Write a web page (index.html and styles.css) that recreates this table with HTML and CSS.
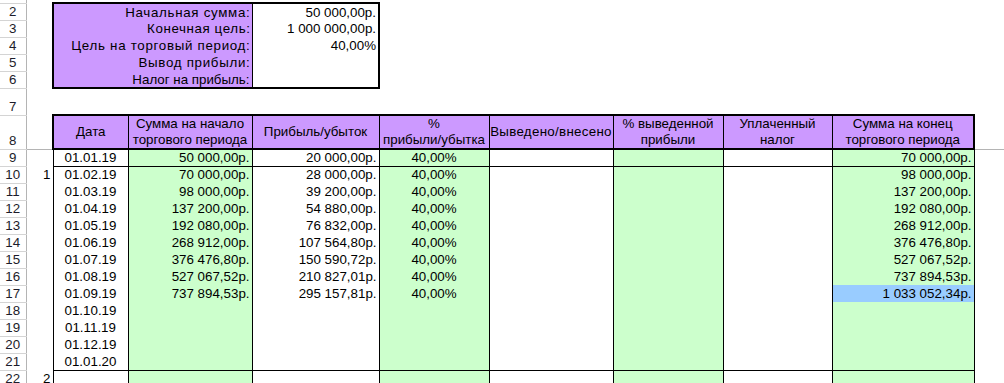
FILE: index.html
```html
<!DOCTYPE html>
<html lang="ru">
<head>
<meta charset="utf-8">
<title>Расчёт</title>
<link rel="stylesheet" href="styles.css">
</head>
<body>
<table class="sheet">
<colgroup>
<col class="w-rh"><col class="w-a"><col class="w-b"><col class="w-c"><col class="w-d"><col class="w-e"><col class="w-f"><col class="w-g"><col class="w-h"><col class="w-i"><col class="w-j">
</colgroup>
<tbody>
<tr class="h3"><th class="rh"></th><td colspan="10"></td></tr>
<tr class="h17"><th class="rh">2</th><td></td><td colspan="2" class="bl bt2 ls07">Начальная сумма:</td><td class="bv bt2">50 000,00р.</td><td colspan="6"></td></tr>
<tr class="h17"><th class="rh">3</th><td></td><td colspan="2" class="bl ls08">Конечная цель:</td><td class="bv">1 000 000,00р.</td><td colspan="6"></td></tr>
<tr class="h17"><th class="rh">4</th><td></td><td colspan="2" class="bl ls07">Цель на торговый период:</td><td class="bv">40,00%</td><td colspan="6"></td></tr>
<tr class="h17"><th class="rh">5</th><td></td><td colspan="2" class="bl ls07">Вывод прибыли:</td><td class="bv"></td><td colspan="6"></td></tr>
<tr class="h17"><th class="rh">6</th><td></td><td colspan="2" class="bl bb2">Налог на прибыль:</td><td class="bv bb2"></td><td colspan="6"></td></tr>
<tr class="h27"><th class="rh">7</th><td colspan="10"></td></tr>
<tr class="h32">
<th class="rh frz">8</th><td class="frz"></td>
<td class="hd first">Дата</td>
<td class="hd">Сумма на начало<br>торгового периода</td>
<td class="hd">Прибыль/убыток</td>
<td class="hd">%<br>прибыли/убытка</td>
<td class="hd one">Выведено/внесено</td>
<td class="hd">% выведенной<br>прибыли</td>
<td class="hd">Уплаченный<br>налог</td>
<td class="hd last">Сумма на конец<br>торгового периода</td>
<td class="frz"></td>
</tr>
<tr class="h17"><th class="rh">9</th><td></td><td class="d c bb">01.01.19</td><td class="d g r bb">50 000,00р.</td><td class="d r bb">20 000,00р.</td><td class="d g c bb">40,00%</td><td class="d bb"></td><td class="d g bb"></td><td class="d bb"></td><td class="d g r bb">70 000,00р.</td><td></td></tr>
<tr class="h17"><th class="rh">10</th><td class="r">1</td><td class="d c">01.02.19</td><td class="d g r">70 000,00р.</td><td class="d r">28 000,00р.</td><td class="d g c">40,00%</td><td class="d"></td><td class="d g"></td><td class="d"></td><td class="d g r">98 000,00р.</td><td></td></tr>
<tr class="h17"><th class="rh">11</th><td></td><td class="d c">01.03.19</td><td class="d g r">98 000,00р.</td><td class="d r">39 200,00р.</td><td class="d g c">40,00%</td><td class="d"></td><td class="d g"></td><td class="d"></td><td class="d g r">137 200,00р.</td><td></td></tr>
<tr class="h17"><th class="rh">12</th><td></td><td class="d c">01.04.19</td><td class="d g r">137 200,00р.</td><td class="d r">54 880,00р.</td><td class="d g c">40,00%</td><td class="d"></td><td class="d g"></td><td class="d"></td><td class="d g r">192 080,00р.</td><td></td></tr>
<tr class="h17"><th class="rh">13</th><td></td><td class="d c">01.05.19</td><td class="d g r">192 080,00р.</td><td class="d r">76 832,00р.</td><td class="d g c">40,00%</td><td class="d"></td><td class="d g"></td><td class="d"></td><td class="d g r">268 912,00р.</td><td></td></tr>
<tr class="h17"><th class="rh">14</th><td></td><td class="d c">01.06.19</td><td class="d g r">268 912,00р.</td><td class="d r">107 564,80р.</td><td class="d g c">40,00%</td><td class="d"></td><td class="d g"></td><td class="d"></td><td class="d g r">376 476,80р.</td><td></td></tr>
<tr class="h17"><th class="rh">15</th><td></td><td class="d c">01.07.19</td><td class="d g r">376 476,80р.</td><td class="d r">150 590,72р.</td><td class="d g c">40,00%</td><td class="d"></td><td class="d g"></td><td class="d"></td><td class="d g r">527 067,52р.</td><td></td></tr>
<tr class="h17"><th class="rh">16</th><td></td><td class="d c">01.08.19</td><td class="d g r">527 067,52р.</td><td class="d r">210 827,01р.</td><td class="d g c">40,00%</td><td class="d"></td><td class="d g"></td><td class="d"></td><td class="d g r">737 894,53р.</td><td></td></tr>
<tr class="h17"><th class="rh">17</th><td></td><td class="d c">01.09.19</td><td class="d g r">737 894,53р.</td><td class="d r">295 157,81р.</td><td class="d g c">40,00%</td><td class="d"></td><td class="d g"></td><td class="d"></td><td class="d sel r">1 033 052,34р.</td><td></td></tr>
<tr class="h17"><th class="rh">18</th><td></td><td class="d c">01.10.19</td><td class="d g"></td><td class="d"></td><td class="d g"></td><td class="d"></td><td class="d g"></td><td class="d"></td><td class="d g"></td><td></td></tr>
<tr class="h17"><th class="rh">19</th><td></td><td class="d c">01.11.19</td><td class="d g"></td><td class="d"></td><td class="d g"></td><td class="d"></td><td class="d g"></td><td class="d"></td><td class="d g"></td><td></td></tr>
<tr class="h17"><th class="rh">20</th><td></td><td class="d c">01.12.19</td><td class="d g"></td><td class="d"></td><td class="d g"></td><td class="d"></td><td class="d g"></td><td class="d"></td><td class="d g"></td><td></td></tr>
<tr class="h17"><th class="rh">21</th><td></td><td class="d c bb">01.01.20</td><td class="d g bb"></td><td class="d bb"></td><td class="d g bb"></td><td class="d bb"></td><td class="d g bb"></td><td class="d bb"></td><td class="d g bb"></td><td></td></tr>
<tr class="h17"><th class="rh">22</th><td class="r">2</td><td class="d"></td><td class="d g"></td><td class="d"></td><td class="d g"></td><td class="d"></td><td class="d g"></td><td class="d"></td><td class="d g"></td><td></td></tr>
</tbody>
</table>
</body>
</html>
```
FILE: styles.css
```css
* { box-sizing: border-box; }
html, body { margin: 0; padding: 0; background: #fff; overflow: hidden; }
body {
  font-family: "Liberation Sans", Arial, sans-serif;
  font-size: 10pt;
  color: #000;
}
.sheet {
  border-collapse: collapse;
  table-layout: fixed;
  width: 1004px;
}
.w-rh { width: 26px; }
.w-a { width: 27px; }
.w-b { width: 75px; }
.w-c { width: 124px; }
.w-d { width: 127px; }
.w-e { width: 110px; }
.w-f { width: 124px; }
.w-g { width: 110px; }
.w-h { width: 109px; }
.w-i { width: 142px; }
.w-j { width: 30px; }

.h3 { height: 3px; }
.h17 { height: 17px; }
.h27 { height: 27px; }
.h32 { height: 32px; }

.sheet td, .sheet th {
  padding: 0 2px;
  font-weight: normal;
  white-space: nowrap;
  overflow: hidden;
  line-height: 15px;
  vertical-align: middle;
}
.sheet th.rh {
  color: #1c1c2a;
  text-align: center;
  vertical-align: bottom;
  line-height: 16px;
  padding: 0;
  border-bottom: 1px solid #d4d4d4;
  border-right: 1px solid #b4b4b4;
}
.frz { border-bottom: 1px solid #b4b4b4; }

.bl {
  background: #cc99ff;
  text-align: right;
  border-left: 2px solid #000;
  border-right: 1px solid #000;
}
.sheet td.ls07 { letter-spacing: 0.7px; padding-right: 1px; }
.sheet td.ls08 { letter-spacing: 0.6px; padding-right: 1px; }
.bv {
  text-align: right;
  border-right: 2px solid #000;
}
.bt2 { border-top: 2px solid #000; }
.bb2 { border-bottom: 2px solid #000; }

.sheet td.hd {
  background: #cc99ff;
  text-align: center;
  white-space: normal;
  line-height: 16px;
  border: 1px solid #000;
  border-top: 2px solid #000;
  border-bottom: 2px solid #000;
}
.sheet td.hd.one {
  white-space: nowrap;
  letter-spacing: 0.3px;
  padding: 0;
}
.sheet td.hd.first { border-left: 2px solid #000; }
.sheet td.hd.last { border-right: 2px solid #000; }

.d {
  border-left: 1px solid #000;
  border-right: 1px solid #000;
}
.bb { border-bottom: 1px solid #000; }
.g { background: #ccffcc; }
.sel { background: #99ccff; }
.c { text-align: center; }
.r { text-align: right; }
```
